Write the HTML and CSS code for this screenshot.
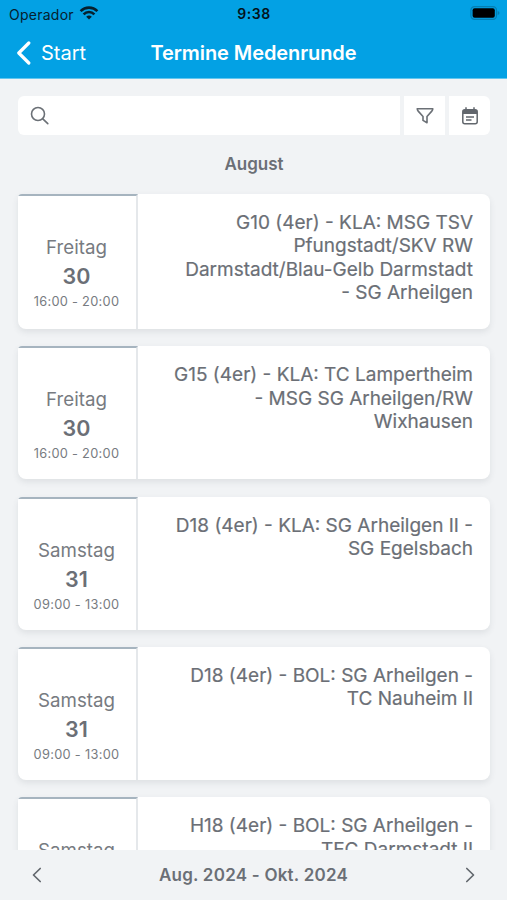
FILE: index.html
```html
<!DOCTYPE html>
<html lang="de">
<head>
<meta charset="utf-8">
<title>Termine Medenrunde</title>
<link rel="stylesheet" href="styles.css">
</head>
<body>
<div class="app">
  <header class="header">
    <div class="status">
      <div class="carrier"><span>Operador</span>
        <svg class="wifi" width="20" height="14" viewBox="0 0 20 14" fill="none" stroke="#06202e" stroke-width="2.6"><path d="M1.6 5.1a12 12 0 0 1 16.8 0"/><path d="M4.6 8.3a7.6 7.6 0 0 1 10.8 0"/><path d="M10 13.6 7.2 10.8a4 4 0 0 1 5.6 0z" fill="#06202e" stroke="none"/></svg>
      </div>
      <time class="clock">9:38</time>
      <svg class="battery" width="30" height="14" viewBox="0 0 30 14"><rect x=".9" y=".7" width="25.6" height="12.6" rx="3.6" fill="none" stroke="#047fb3" stroke-width="1.2"/><rect x="2.6" y="2.3" width="22.2" height="9.4" rx="2" fill="#000"/><path d="M27.7 5q1.8.6 1.8 2t-1.8 2z" fill="#047fb3"/></svg>
    </div>
    <nav class="nav">
      <a class="back"><svg width="15" height="24" viewBox="0 0 15 24" fill="none" stroke="#fff" stroke-width="3.2" stroke-linecap="round" stroke-linejoin="round"><path d="M12.8 2 2.8 12l10 10"/></svg><span>Start</span></a>
      <h1 class="title">Termine Medenrunde</h1>
    </nav>
  </header>
  <main class="content">
    <div class="toolbar">
      <div class="search"><svg width="20" height="20" viewBox="0 0 20 20" fill="none" stroke="#6b7076" stroke-width="1.6" stroke-linecap="round"><circle cx="8" cy="8" r="6.5"/><path d="m12.8 12.8 5 4.8"/></svg></div>
      <div class="tool"><svg width="18" height="18" viewBox="0 0 18 18" fill="none" stroke="#6b7076" stroke-width="1.6" stroke-linejoin="round"><path d="M1.2 1.8h15.6q-.2 1.5-1 2.3L11 9.5v6.3L7 13.4V9.5L2.2 4.1q-.9-1-1-2.3z"/></svg></div>
      <div class="tool tool-last"><svg width="18" height="18" viewBox="0 0 18 18" fill="none" stroke="#62676d" stroke-width="1.5"><rect x="1.8" y="2.8" width="14.4" height="14" rx="2"/><path d="M2 3h14v4H2z" fill="#62676d" stroke="none"/><path d="M5 .2v3m8-3v3M5 10h8m-8 3h5.5"/></svg></div>
    </div>
    <h2 class="month">August</h2>
    <section class="list">
      <article class="card card-tall"><div class="date"><span class="day">Freitag</span><b class="num">30</b><span class="hours">16:00 - 20:00</span></div><p class="event">G10 (4er) - KLA: MSG TSV<br>Pfungstadt/SKV RW<br>Darmstadt/Blau-Gelb Darmstadt<br>- SG Arheilgen</p></article>
      <article class="card"><div class="date"><span class="day">Freitag</span><b class="num">30</b><span class="hours">16:00 - 20:00</span></div><p class="event">G15 (4er) - KLA: TC Lampertheim<br>- MSG SG Arheilgen/RW<br>Wixhausen</p></article>
      <article class="card"><div class="date"><span class="day">Samstag</span><b class="num">31</b><span class="hours">09:00 - 13:00</span></div><p class="event">D18 (4er) - KLA: SG Arheilgen II -<br>SG Egelsbach</p></article>
      <article class="card"><div class="date"><span class="day">Samstag</span><b class="num">31</b><span class="hours">09:00 - 13:00</span></div><p class="event">D18 (4er) - BOL: SG Arheilgen -<br>TC Nauheim II</p></article>
      <article class="card"><div class="date"><span class="day">Samstag</span></div><p class="event">H18 (4er) - BOL: SG Arheilgen -<br>TEC Darmstadt II</p></article>
    </section>
  </main>
  <footer class="footer">
    <svg width="10" height="16" viewBox="0 0 10 16" fill="none" stroke="#62676d" stroke-width="1.7" stroke-linecap="round" stroke-linejoin="round"><path d="M8.2 1.5 1.5 8l6.7 6.5"/></svg>
    <strong class="range">Aug. 2024 - Okt. 2024</strong>
    <svg width="10" height="16" viewBox="0 0 10 16" fill="none" stroke="#62676d" stroke-width="1.7" stroke-linecap="round" stroke-linejoin="round"><path d="M1.8 1.5 8.5 8l-6.7 6.5"/></svg>
  </footer>
</div>
</body>
</html>
```
FILE: styles.css
```css
* { box-sizing: border-box; }
body { margin: 0; font-family: Inter, "Liberation Sans", sans-serif; color: #6b6f76; background: #f1f3f5; }
.app { height: 900px; display: flex; flex-direction: column; overflow: hidden; }
.header { flex: none; height: 79px; background: #03a1e4; border-bottom: 1px solid #62c6ef; }
.status { height: 28px; padding: 0 7px 0 9px; display: grid; grid-template-columns: 1fr auto 1fr; align-items: center; color: #06202e; font-size: 14px; }
.carrier { display: flex; align-items: center; gap: 5px; letter-spacing: .25px; }
.wifi { margin-top: -2px; }
.clock { font-weight: 600; letter-spacing: .5px; color: #03131b; margin-top: -1px; margin-right: 1px; }
.battery { justify-self: end; margin-top: -2px; }
.nav { height: 50px; padding: 0 16px; display: grid; grid-template-columns: 1fr auto 1fr; align-items: center; color: #fff; }
.back { display: flex; align-items: center; gap: 10px; font-size: 20px; }
.title { margin: 0; font-size: 20px; font-weight: 600; letter-spacing: -.08px; }
.content { flex: 1; min-height: 0; overflow: hidden; padding: 17px 17px 0 18px; }
.toolbar { display: flex; gap: 4px; height: 39px; }
.search, .tool { background: #fff; display: flex; align-items: center; }
.search { flex: 1; padding-left: 12px; border-radius: 6px 0 0 6px; }
.tool { width: 41px; justify-content: center; }
.tool-last { border-radius: 0 6px 6px 0; }
.month { margin: 18px 0 20px; height: 21px; line-height: 22px; font-size: 17px; font-weight: 600; text-align: center; }
.list { display: flex; flex-direction: column; gap: 17.2px; }
.card { flex: none; display: flex; height: 133.1px; background: #fff; border-radius: 4px 8px 8px 8px; overflow: hidden; box-shadow: 0 3px 6px rgba(60, 70, 80, .1); }
.card-tall { height: 135.2px; }
.date { width: 120px; border-top: 2px solid #a6b4bf; border-right: 2px solid #e5e8eb; padding-top: 39px; display: flex; flex-direction: column; align-items: center; padding-right: 1px; }
.day { font-size: 18.7px; line-height: 26px; color: #777b81; }
.num { font-size: 21.5px; line-height: 31px; font-weight: 600; }
.hours { font-size: 12.8px; line-height: 19px; letter-spacing: .3px; color: #777b81; }
.event { flex: 1; margin: 0; padding: 17px 17px 0 0; font-size: 19px; line-height: 23.3px; text-align: right; white-space: nowrap; -webkit-text-stroke: .2px #6b6f76; }
.footer { flex: none; height: 50px; padding: 0 32px; display: flex; justify-content: space-between; align-items: center; background: #f1f3f5; }
.range { font-size: 17px; font-weight: 600; letter-spacing: .23px; }
```
